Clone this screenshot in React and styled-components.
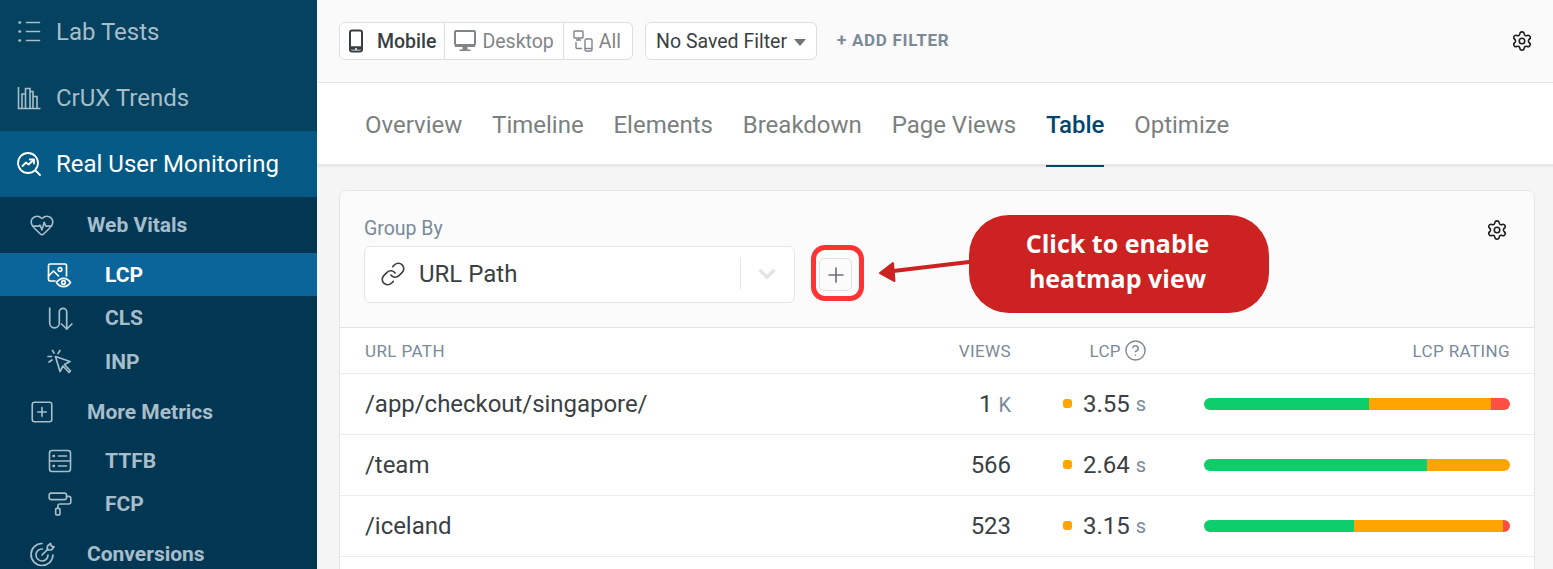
import React from 'react'
import styled, { createGlobalStyle } from 'styled-components'
import {
  HeartPulse, SquarePlus, PaintRoller,
  Link, Settings, CircleHelp, Plus, ChevronDown,
} from 'lucide-react'

const Global = createGlobalStyle`
  html, body { margin: 0; padding: 0; height: 100%; overflow: hidden; }
  body { font-family: Roboto, "Liberation Sans", sans-serif; background: #f5f5f5; color: #3a3f44; }
`

const Page = styled.div`
  display: flex;
  height: 569px;
  overflow: hidden;
`

const Sidebar = styled.nav`
  width: 317px;
  flex: none;
  background: #04425f;
  overflow: hidden;
  margin-top: -1px;
`

const MainItem = styled.div`
  display: flex;
  align-items: center;
  height: 66px;
  padding-left: 17px;
  gap: 15px;
  font-size: 24px;
  color: ${p => (p.$active ? '#ffffff' : '#a8bdca')};
  background: ${p => (p.$active ? '#055a85' : 'transparent')};
  svg { width: 24px; height: 24px; flex: none; }
`

const SubPanel = styled.div`
  background: #023754;
  height: 373px;
`

const GroupItem = styled.div`
  display: flex;
  align-items: center;
  height: ${p => p.$h}px;
  padding-left: 29px;
  gap: 32px;
  font-size: 21px;
  font-weight: 700;
  color: #a8bdca;
  svg { width: 26px; height: 26px; flex: none; }
`

const LeafItem = styled.div`
  display: flex;
  align-items: center;
  height: ${p => p.$h || 44}px;
  padding-left: 47px;
  gap: 32px;
  font-size: 21px;
  font-weight: 700;
  color: ${p => (p.$active ? '#ffffff' : '#a8bdca')};
  background: ${p => (p.$active ? '#0a659b' : 'transparent')};
  svg { width: 26px; height: 26px; flex: none; }
`

const Main = styled.main`
  flex: 1;
  min-width: 0;
  display: flex;
  flex-direction: column;
`

const TopBar = styled.header`
  display: flex;
  align-items: center;
  box-sizing: content-box;
  height: 82px;
  flex: none;
  padding: 0 20px 0 22px;
  background: #fafafa;
  border-bottom: 1px solid #e6e6e6;
`

const DeviceGroup = styled.div`
  display: flex;
  height: 36px;
  border: 1px solid #dedede;
  border-radius: 6px;
  background: #fff;
`

const DeviceButton = styled.div`
  display: flex;
  align-items: center;
  padding: 0 ${p => p.$pr}px 0 ${p => p.$pl}px;
  gap: ${p => p.$gap}px;
  font-size: 19.5px;
  font-weight: ${p => (p.$active ? 500 : 400)};
  color: ${p => (p.$active ? '#3a3f44' : '#808589')};
  & + & { border-left: 1px solid #dedede; }
`

const FilterSelect = styled.div`
  display: flex;
  align-items: center;
  height: 36px;
  margin-left: 12px;
  padding: 0 10px;
  gap: 7px;
  border: 1px solid #dedede;
  border-radius: 6px;
  background: #fff;
  font-size: 19.5px;
  color: #3a3f44;
`

const Caret = styled.span`
  width: 0;
  height: 0;
  border-left: 6px solid transparent;
  border-right: 6px solid transparent;
  border-top: 7px solid #6f7478;
  margin-top: 3px;
`

const AddFilter = styled.div`
  margin: 0 0 2px 20px;
  font-size: 17px;
  font-weight: 700;
  color: #7b8a98;
  letter-spacing: 0.7px;
`

const GearButton = styled.div`
  margin-left: auto;
  display: flex;
  color: #1c1c1c;
  svg { width: 22px; height: 22px; }
`

const Tabs = styled.div`
  display: flex;
  gap: 29.8px;
  height: 81px;
  flex: none;
  padding-left: 48px;
  background: #fff;
  border-bottom: 3px solid #e8e8e8;
`

const Tab = styled.div`
  position: relative;
  display: flex;
  align-items: center;
  padding-top: 2px;
  font-size: 24px;
  font-weight: ${p => (p.$active ? 500 : 400)};
  color: ${p => (p.$active ? '#04466b' : '#7c7f80')};
  ${p => p.$active && `
    &::after {
      content: '';
      position: absolute;
      left: 0;
      right: 0;
      bottom: -3px;
      height: 2px;
      background: #04466b;
    }
  `}
`

const Content = styled.div`
  padding: 23px 18px 0 22px;
  flex: 1;
`

const Card = styled.section`
  border: 1px solid #e6e6e6;
  border-radius: 8px 8px 0 0;
  background: #fff;
  height: 420px;
`

const CardHeader = styled.div`
  position: relative;
  height: 137px;
  box-sizing: border-box;
  padding: 27px 24px 0;
  background: #fbfbfb;
  border-radius: 8px 8px 0 0;
  border-bottom: 1px solid #e2e2e2;
`

const GroupLabel = styled.div`
  font-size: 19.5px;
  line-height: 22px;
  color: #7b8a98;
`

const GroupRow = styled.div`
  display: flex;
  align-items: center;
  margin-top: 6px;
`

const GroupSelect = styled.div`
  display: flex;
  align-items: center;
  box-sizing: border-box;
  width: 431px;
  height: 57px;
  padding: 0 0 2px 15px;
  background: #fff;
  border: 1px solid #e6e6e6;
  border-radius: 6px;
  font-size: 24px;
  color: #3a3f44;
  svg.link { width: 26px; height: 26px; margin-right: 13px; }
`

const SelectDivider = styled.span`
  width: 1px;
  height: 32px;
  margin-left: auto;
  background: #e4e4e4;
`

const SelectChevron = styled.span`
  display: flex;
  margin: 0 14px 0 13px;
  color: #e4e4e4;
  svg { width: 26px; height: 26px; }
`

const PlusButton = styled.div`
  position: relative;
  display: flex;
  align-items: center;
  justify-content: center;
  box-sizing: border-box;
  width: 33px;
  height: 33px;
  margin-left: 24px;
  border: 1px solid #dedede;
  border-radius: 5px;
  color: #6f7478;
  svg { width: 24px; height: 24px; }
  &::after {
    content: '';
    position: absolute;
    inset: -14px -13px -11px -9px;
    border: 5px solid #ff3333;
    border-radius: 14px;
  }
`

const Callout = styled.div`
  position: absolute;
  left: 629px;
  top: 24px;
  box-sizing: border-box;
  width: 300px;
  height: 98px;
  padding: 0 3px 6px 0;
  display: flex;
  align-items: center;
  justify-content: center;
  text-align: center;
  background: #cc2222;
  border-radius: 40px;
  color: #fff;
  font-family: "Open Sans", sans-serif;
  font-size: 25px;
  font-weight: 700;
  line-height: 35px;
`

const CalloutArrow = styled.svg`
  position: absolute;
  left: 534px;
  top: 60px;
  width: 100px;
  height: 34px;
`

const CardGear = styled.div`
  position: absolute;
  right: 26px;
  top: 28px;
  display: flex;
  color: #1c1c1c;
  svg { width: 22px; height: 22px; }
`

const rowCols = 'grid-template-columns: 1fr 100px 135px 364px;'

const TableHead = styled.div`
  display: grid;
  ${rowCols}
  align-items: center;
  height: 45px;
  padding: 0 24px 0 25px;
  border-bottom: 1px solid #ececec;
  font-size: 17px;
  letter-spacing: 0.4px;
  color: #7b8a98;
`

const HeadCell = styled.div`
  display: flex;
  align-items: center;
  justify-content: ${p => (p.$right ? 'flex-end' : 'flex-start')};
  gap: 3px;
  svg { width: 23px; height: 23px; margin-right: -1px; }
`

const Row = styled.div`
  display: grid;
  ${rowCols}
  align-items: center;
  height: 60px;
  padding: 0 24px 0 25px;
  border-bottom: 1px solid #ececec;
  font-size: 24px;
  letter-spacing: -0.04px;
  color: #3a3f44;
`

const NumCell = styled.div`
  text-align: right;
`

const Unit = styled.span`
  margin-left: 6px;
  font-size: 20px;
  color: #7b8a98;
`

const LcpCell = styled.div`
  display: flex;
  align-items: center;
  justify-content: flex-end;
`

const Dot = styled.span`
  width: 9px;
  height: 9px;
  margin: 0 11px 2px 0;
  border-radius: 3px;
  background: #ffa400;
`

const BarCell = styled.div`
  display: flex;
  justify-content: flex-end;
`

const Bar = styled.div`
  display: flex;
  width: 306px;
  height: 12px;
  border-radius: 6px;
  overflow: hidden;
`

const Seg = styled.div`
  background: ${p => p.$color};
`

const BAR_COLORS = ['#0cce6b', '#ffa400', '#ff4e42']

const rows = [
  { path: '/app/checkout/singapore/', views: '1', unit: 'K', lcp: '3.55', bar: [165, 122, 19] },
  { path: '/team', views: '566', lcp: '2.64', bar: [223, 83, 0] },
  { path: '/iceland', views: '523', lcp: '3.15', bar: [150, 149, 7] },
]

const ListIcon = () => (
  <svg viewBox="0 0 24 24" fill="none" stroke="currentColor" strokeWidth="1.6" strokeLinecap="round">
    <path d="M9.500 2.500h13M9.500 11.500h13M9.500 20.500h13" />
    <path d="M2.500 2.500h.5M2.500 11.500h.5M2.500 20.500h.5" strokeWidth="2.600" />
  </svg>
)

const ChartIcon = () => (
  <svg viewBox="0 0 24 24" fill="none" stroke="currentColor" strokeWidth="1.6">
    <path d="M1.500 1v21.500H23.500" />
    <path d="M5 22V8h3.500v14M8.500 22V2.500H13V22M13 22V5.500h3V22M16 22v-11.500h4V22" />
  </svg>
)

const RumIcon = () => (
  <svg viewBox="0 0 24 24" fill="none" stroke="currentColor" strokeWidth="1.8" strokeLinecap="round" strokeLinejoin="round">
    <circle cx="11" cy="11" r="10" />
    <path d="M18.500 18.500L23 23" />
    <path d="M5.500 14l3.500-3.500 2.500 2L16.500 8" />
    <path d="M12.800 7.500h4.200v4" />
  </svg>
)

const ImageEyeIcon = () => (
  <svg viewBox="0 0 26 26" fill="none" stroke="currentColor" strokeWidth="1.7" strokeLinecap="round" strokeLinejoin="round">
    <path d="M8 19H3a1.500 1.500 0 0 1-1.500-1.500v-14A1.500 1.500 0 0 1 3 2h15a1.500 1.500 0 0 1 1.500 1.500V14" />
    <circle cx="13" cy="7.500" r="1.800" />
    <path d="M1.500 14l5-5 5 5" />
    <path d="M9.500 20.500c2-3 4.500-4.200 7-4.200s5 1.200 7 4.200c-2 3-4.500 4.200-7 4.200s-5-1.200-7-4.200z" />
    <circle cx="16.500" cy="20.500" r="1.800" />
  </svg>
)

const ShiftIcon = () => (
  <svg viewBox="0 0 26 26" fill="none" stroke="currentColor" strokeWidth="1.7" strokeLinecap="round" strokeLinejoin="round">
    <path d="M2.700 3V18a4.800 4.800 0 0 0 9.600 0V7a3.700 3.700 0 0 1 7.400 0V24" />
    <path d="M14.500 19l5.200 5 5.200-5" />
  </svg>
)

const ClickIcon = () => (
  <svg viewBox="0 0 26 26" fill="none" stroke="currentColor" strokeWidth="1.7" strokeLinecap="round" strokeLinejoin="round">
    <path d="M8.500 7.500l4.500 15 3-5.500 6 6.500 1.500-1.500-6-6.500 5.500-3z" />
    <path d="M5.500 1.500L7 4M13 1.500l-2 3M1 7.500h3.500M2 13l3-2" />
  </svg>
)

const ServerIcon = () => (
  <svg viewBox="0 0 26 26" fill="none" stroke="currentColor" strokeWidth="1.6" strokeLinecap="round">
    <rect x="2.500" y="2.500" width="21" height="21" rx="2.500" />
    <path d="M2.500 13h21M11.500 8h8M11.500 18h8" />
    <path d="M6.500 8h.5M6.500 18h.5" strokeWidth="2.400" />
  </svg>
)

const ConversionIcon = () => (
  <svg viewBox="0 0 26 26" fill="none" stroke="currentColor" strokeWidth="1.7" strokeLinecap="round" strokeLinejoin="round">
    <path d="M13 2.500A11 11 0 1 0 24 14" />
    <path d="M13.500 8A6 6 0 1 0 19 14" />
    <path d="M13 14l6-6" />
    <path d="M18 9l.5-4 3-2.500 .8 2.600 2.700.8-2.500 3z" />
  </svg>
)

const PhoneIcon = () => (
  <svg width="17" height="24" viewBox="0 0 17 24" fill="none" stroke="#3a3f44" strokeWidth="2">
    <rect x="2" y="1.500" width="12" height="21" rx="2" />
    <path d="M2 19h12" strokeWidth="3.500" />
    <circle cx="8" cy="20" r="1" fill="#fff" stroke="none" />
  </svg>
)

const DesktopIcon = () => (
  <svg width="22" height="22" viewBox="0 0 22 22" fill="none">
    <rect x="1" y="1" width="20" height="14" rx="1" stroke="#808589" strokeWidth="2" />
    <path d="M1 14h20v3H1z" fill="#808589" />
    <path d="M8.500 17h5v2.500h3V21h-11v-1.500h3z" fill="#808589" />
  </svg>
)

const AllIcon = () => (
  <svg width="20" height="22" viewBox="0 0 20 22" fill="none" stroke="#808589" strokeWidth="1.400">
    <rect x="1" y="1" width="9" height="7" rx="0.800" />
    <path d="M5.500 8v2M3 10h5" />
    <path d="M3 12v5.500a1 1 0 0 0 1 1h5" />
    <rect x="12" y="9" width="7" height="12" rx="1.200" />
    <path d="M12 18.500h7" />
  </svg>
)

export default function App() {
  return (
    <Page>
      <Global />
      <Sidebar>
        <MainItem><ListIcon /> Lab Tests</MainItem>
        <MainItem><ChartIcon /> CrUX Trends</MainItem>
        <MainItem $active><RumIcon /> Real User Monitoring</MainItem>
        <SubPanel>
          <GroupItem $h={56}><HeartPulse strokeWidth={1.5} /> Web Vitals</GroupItem>
          <LeafItem $active $h={43}><ImageEyeIcon /> LCP</LeafItem>
          <LeafItem><ShiftIcon /> CLS</LeafItem>
          <LeafItem><ClickIcon /> INP</LeafItem>
          <GroupItem $h={55}><SquarePlus strokeWidth={1.5} /> More Metrics</GroupItem>
          <LeafItem $h={43}><ServerIcon /> TTFB</LeafItem>
          <LeafItem $h={43}><PaintRoller strokeWidth={1.5} /> FCP</LeafItem>
          <GroupItem $h={57}><ConversionIcon /> Conversions</GroupItem>
        </SubPanel>
      </Sidebar>
      <Main>
        <TopBar>
          <DeviceGroup>
            <DeviceButton $active $pl={8} $pr={8} $gap={12}><PhoneIcon /> Mobile</DeviceButton>
            <DeviceButton $pl={9} $pr={9} $gap={6}><DesktopIcon /> Desktop</DeviceButton>
            <DeviceButton $pl={9} $pr={11} $gap={6}><AllIcon /> All</DeviceButton>
          </DeviceGroup>
          <FilterSelect>No Saved Filter <Caret /></FilterSelect>
          <AddFilter>+ ADD FILTER</AddFilter>
          <GearButton><Settings strokeWidth={1.7} /></GearButton>
        </TopBar>
        <Tabs>
          <Tab>Overview</Tab>
          <Tab>Timeline</Tab>
          <Tab>Elements</Tab>
          <Tab>Breakdown</Tab>
          <Tab>Page Views</Tab>
          <Tab $active>Table</Tab>
          <Tab>Optimize</Tab>
        </Tabs>
        <Content>
          <Card>
            <CardHeader>
              <GroupLabel>Group By</GroupLabel>
              <GroupRow>
                <GroupSelect>
                  <Link className="link" strokeWidth={1.5} />
                  URL Path
                  <SelectDivider />
                  <SelectChevron><ChevronDown strokeWidth={3} /></SelectChevron>
                </GroupSelect>
                <PlusButton><Plus strokeWidth={1.7} /></PlusButton>
              </GroupRow>
              <CardGear><Settings strokeWidth={1.7} /></CardGear>
              <CalloutArrow viewBox="0 0 100 34" fill="none">
                <path d="M97 10.700L15 20.500" stroke="#cc2222" strokeWidth="4" />
                <path d="M6 22l13-10 1.500 18z" fill="#cc2222" stroke="#cc2222" strokeWidth="2" strokeLinejoin="round" />
              </CalloutArrow>
              <Callout>Click to enable<br />heatmap view</Callout>
            </CardHeader>
            <TableHead>
              <HeadCell>URL PATH</HeadCell>
              <HeadCell $right>VIEWS</HeadCell>
              <HeadCell $right>LCP <CircleHelp strokeWidth={1.5} /></HeadCell>
              <HeadCell $right>LCP RATING</HeadCell>
            </TableHead>
            {rows.map(r => (
              <Row key={r.path}>
                <div>{r.path}</div>
                <NumCell>{r.views}{r.unit && <Unit>{r.unit}</Unit>}</NumCell>
                <LcpCell><Dot />{r.lcp}<Unit>s</Unit></LcpCell>
                <BarCell>
                  <Bar>
                    {r.bar.map((w, i) => <Seg key={i} $color={BAR_COLORS[i]} style={{ width: w }} />)}
                  </Bar>
                </BarCell>
              </Row>
            ))}
          </Card>
        </Content>
      </Main>
    </Page>
  )
}
